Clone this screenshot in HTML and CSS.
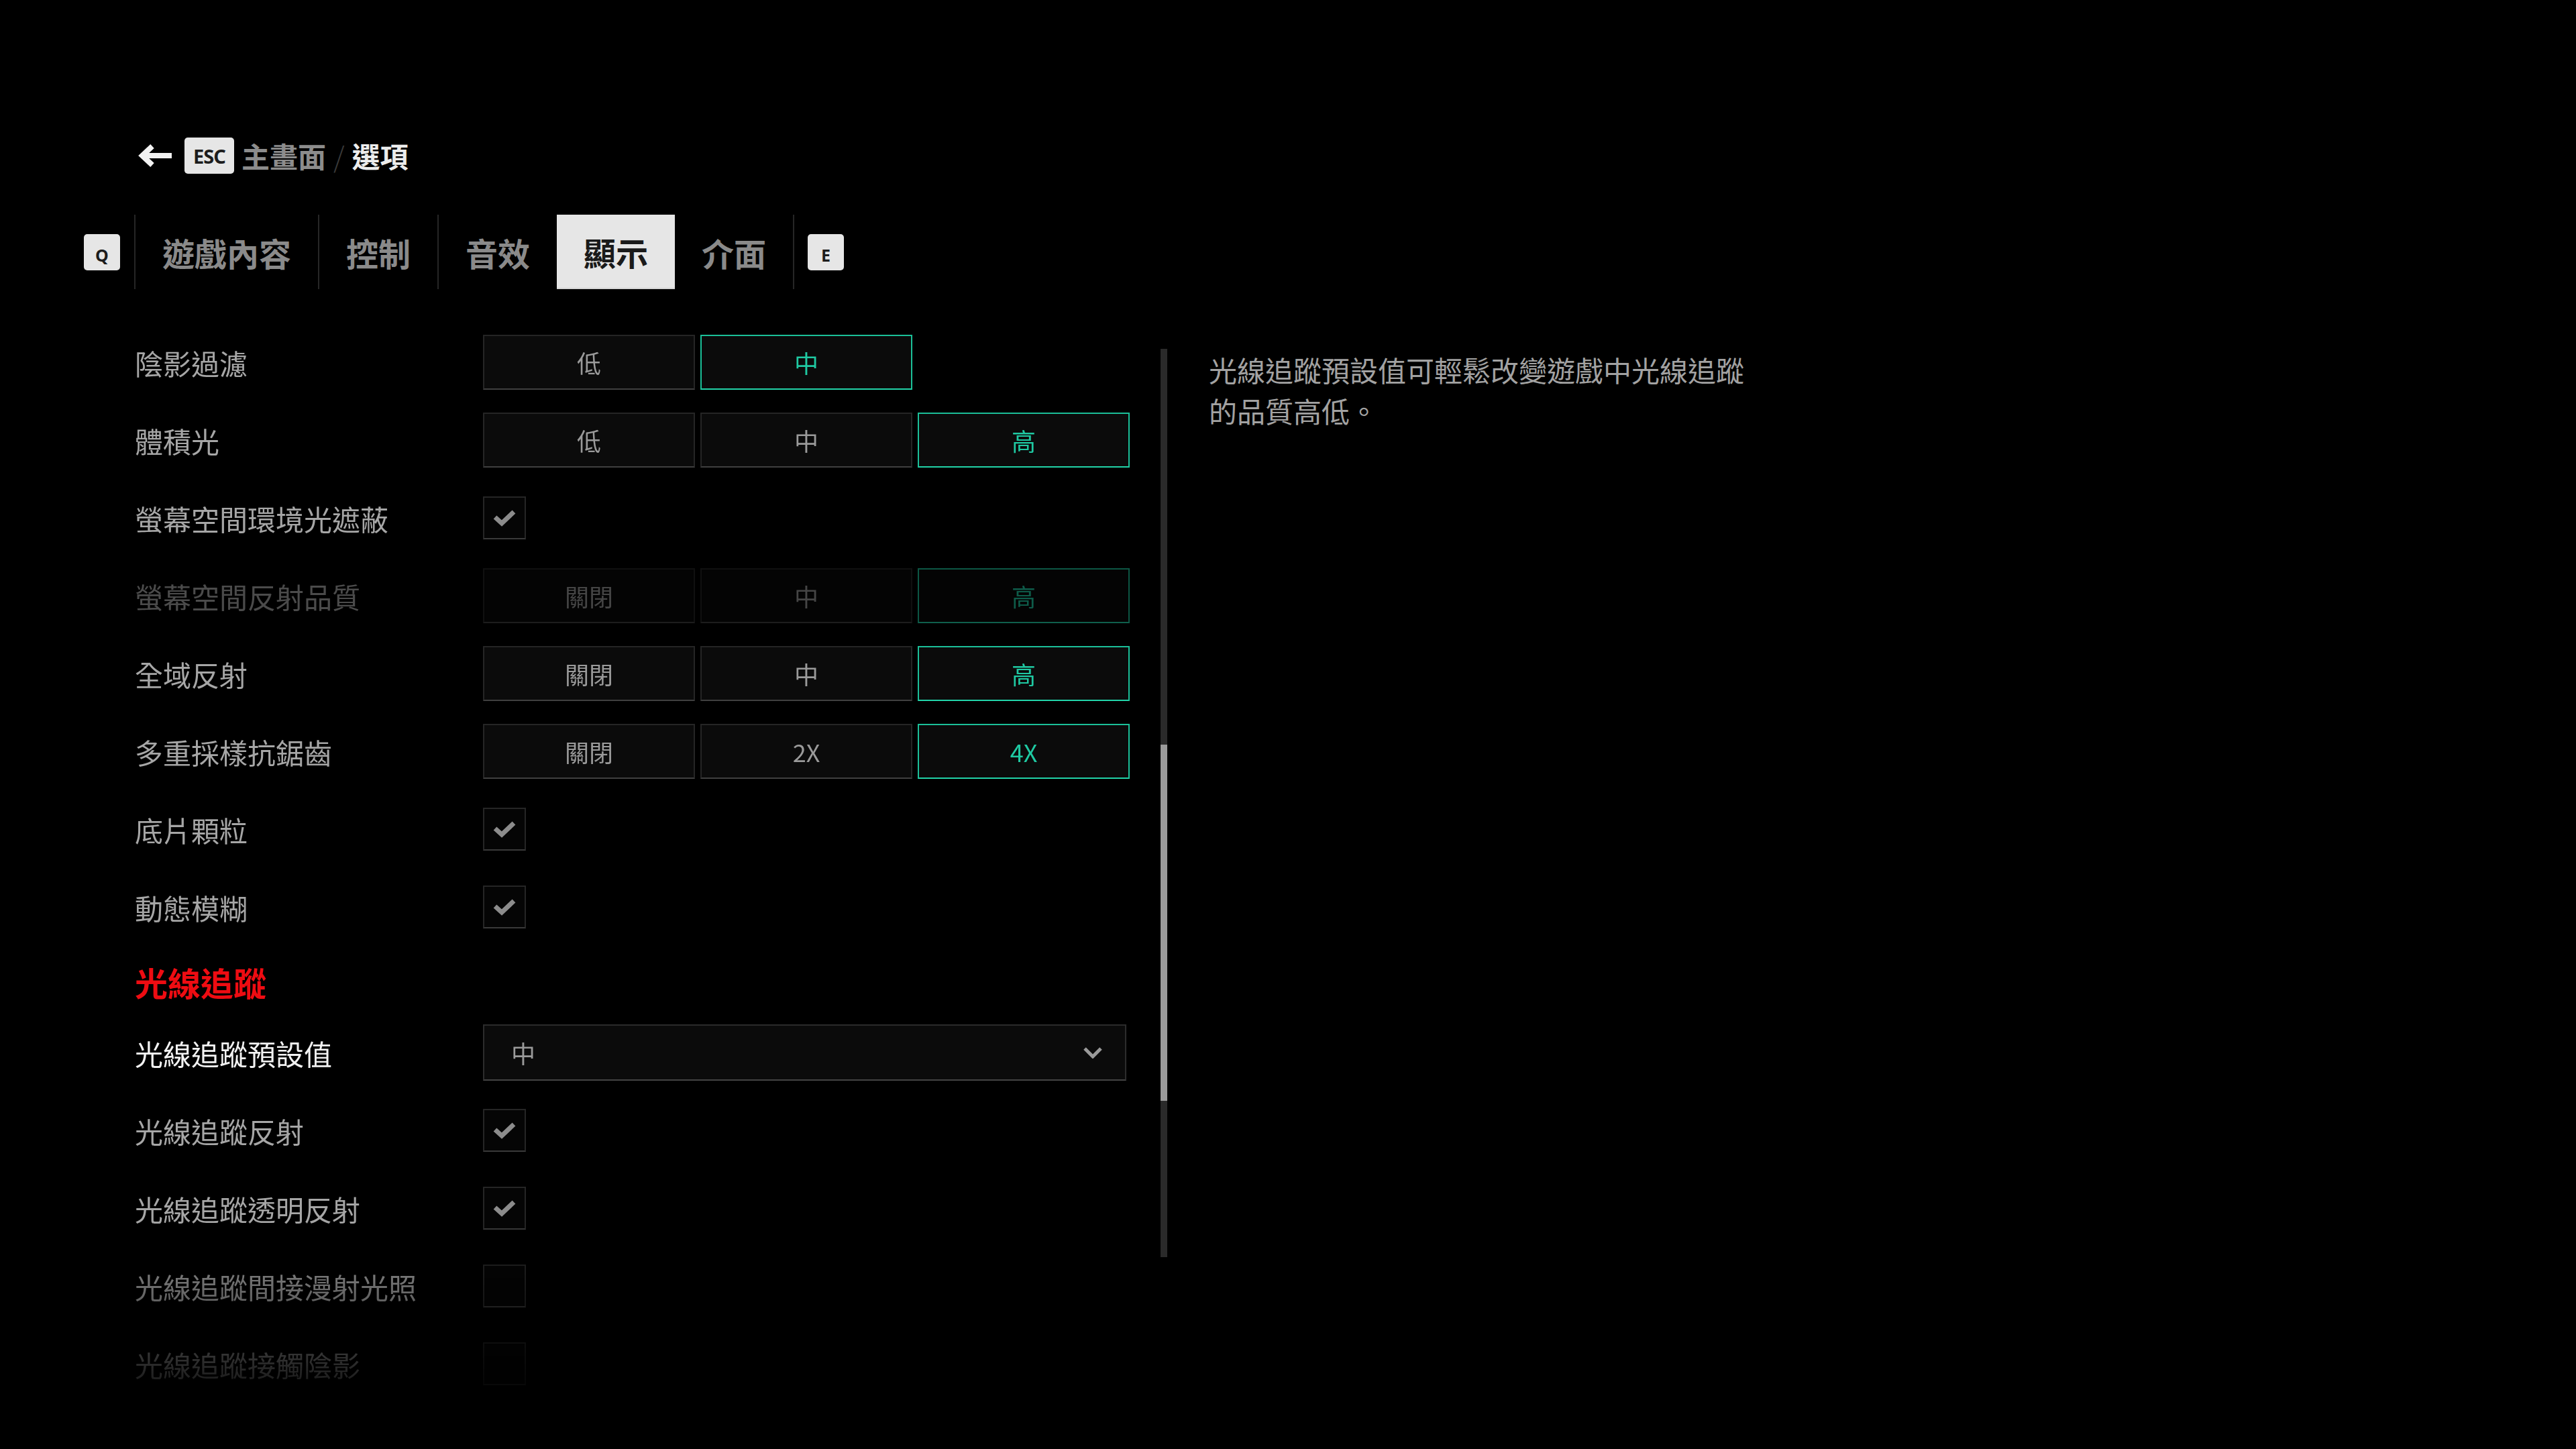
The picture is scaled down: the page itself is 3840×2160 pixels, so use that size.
FILE: index.html
```html
<!DOCTYPE html>
<html lang="zh-Hant">
<head>
  <meta charset="UTF-8">
  <title>選項 - 顯示</title>
  <link rel="stylesheet" href="styles.css">
</head>
<body>
  <div class="page">
    <!-- Breadcrumb -->
    <div class="breadcrumb">
      <svg class="back-arrow" width="50" height="34" viewBox="0 0 50 34">
        <path d="M50 17 H9" stroke="#f2f2f2" stroke-width="8" fill="none"/>
        <path d="M21 3 L6 17 L21 31" stroke="#f2f2f2" stroke-width="8" fill="none" stroke-linejoin="miter"/>
      </svg>
      <span class="key key-esc">ESC</span>
      <span class="crumb">主畫面</span>
      <span class="slash">/</span>
      <span class="crumb current">選項</span>
    </div>

    <!-- Tabs -->
    <div class="tabs">
      <span class="key key-small key-prev">Q</span>
      <span class="tab-sep"></span>
      <span class="tab">遊戲內容</span>
      <span class="tab-sep"></span>
      <span class="tab">控制</span>
      <span class="tab-sep"></span>
      <span class="tab">音效</span>
      <span class="tab active">顯示</span>
      <span class="tab">介面</span>
      <span class="tab-sep"></span>
      <span class="key key-small key-next">E</span>
    </div>

    <!-- Content -->
    <div class="content">
      <div class="settings">
        <div class="row">
          <div class="label">陰影過濾</div>
          <div class="segments">
            <div class="seg">低</div>
            <div class="seg selected">中</div>
          </div>
        </div>
        <div class="row">
          <div class="label">體積光</div>
          <div class="segments">
            <div class="seg">低</div>
            <div class="seg">中</div>
            <div class="seg selected">高</div>
          </div>
        </div>
        <div class="row">
          <div class="label">螢幕空間環境光遮蔽</div>
          <div class="checkbox checked">
            <svg width="34" height="26" viewBox="0 0 34 26"><polyline points="3,12 13,21 31,4" stroke="#8c8c8c" stroke-width="7" fill="none"/></svg>
          </div>
        </div>
        <div class="row disabled">
          <div class="label">螢幕空間反射品質</div>
          <div class="segments">
            <div class="seg">關閉</div>
            <div class="seg">中</div>
            <div class="seg selected">高</div>
          </div>
        </div>
        <div class="row">
          <div class="label">全域反射</div>
          <div class="segments">
            <div class="seg">關閉</div>
            <div class="seg">中</div>
            <div class="seg selected">高</div>
          </div>
        </div>
        <div class="row">
          <div class="label">多重採樣抗鋸齒</div>
          <div class="segments">
            <div class="seg">關閉</div>
            <div class="seg">2X</div>
            <div class="seg selected">4X</div>
          </div>
        </div>
        <div class="row">
          <div class="label">底片顆粒</div>
          <div class="checkbox checked">
            <svg width="34" height="26" viewBox="0 0 34 26"><polyline points="3,12 13,21 31,4" stroke="#8c8c8c" stroke-width="7" fill="none"/></svg>
          </div>
        </div>
        <div class="row">
          <div class="label">動態模糊</div>
          <div class="checkbox checked">
            <svg width="34" height="26" viewBox="0 0 34 26"><polyline points="3,12 13,21 31,4" stroke="#8c8c8c" stroke-width="7" fill="none"/></svg>
          </div>
        </div>

        <div class="section-title">光線追蹤</div>

        <div class="row focused">
          <div class="label">光線追蹤預設值</div>
          <div class="dropdown">
            <span>中</span>
            <svg width="28" height="17" viewBox="0 0 28 17"><polyline points="2,2 14,14 26,2" stroke="#9a9a9a" stroke-width="5" fill="none"/></svg>
          </div>
        </div>
        <div class="row">
          <div class="label">光線追蹤反射</div>
          <div class="checkbox checked">
            <svg width="34" height="26" viewBox="0 0 34 26"><polyline points="3,12 13,21 31,4" stroke="#8c8c8c" stroke-width="7" fill="none"/></svg>
          </div>
        </div>
        <div class="row">
          <div class="label">光線追蹤透明反射</div>
          <div class="checkbox checked">
            <svg width="34" height="26" viewBox="0 0 34 26"><polyline points="3,12 13,21 31,4" stroke="#8c8c8c" stroke-width="7" fill="none"/></svg>
          </div>
        </div>
        <div class="row">
          <div class="label">光線追蹤間接漫射光照</div>
          <div class="checkbox"></div>
        </div>
        <div class="row">
          <div class="label">光線追蹤接觸陰影</div>
          <div class="checkbox"></div>
        </div>
      </div>

      <div class="scrollbar"><div class="thumb"></div></div>

      <p class="description">光線追蹤預設值可輕鬆改變遊戲中光線追蹤的品質高低。</p>
    </div>
  </div>
</body>
</html>
```

FILE: styles.css
```css
* {
  margin: 0;
  padding: 0;
  box-sizing: border-box;
}

body {
  background-color: #000;
  font-family: "Noto Sans CJK TC", "Noto Sans", sans-serif;
  color: #a6a6a6;
  width: 3840px;
  height: 2160px;
  overflow: hidden;
}

.page {
  padding-top: 205px;
}

/* Breadcrumb */
.breadcrumb {
  display: flex;
  align-items: center;
  height: 54px;
  padding-left: 206px;
  gap: 11px;
}

.back-arrow {
  margin-right: 8px;
}

.key {
  display: flex;
  align-items: center;
  justify-content: center;
  background-color: #e6e6e6;
  color: #1c1c1c;
  border-radius: 5px;
  font-family: "Noto Sans", "Open Sans", sans-serif;
  font-weight: 700;
}

.key-esc {
  width: 74px;
  height: 54px;
  font-size: 29px;
  letter-spacing: -1px;
}

.key-small {
  width: 54px;
  height: 54px;
  font-size: 25px;
  padding-top: 9px;
}

.key-prev {
  margin-right: 21px;
}

.key-next {
  margin-left: 20px;
}

.crumb {
  font-size: 42px;
  font-weight: 700;
  color: #8c8c8c;
  line-height: 1;
}

.crumb.current {
  color: #ececec;
}

.slash {
  font-size: 42px;
  font-weight: 300;
  color: #3a3a3a;
  line-height: 1;
}

/* Tabs */
.tabs {
  display: flex;
  align-items: center;
  height: 111px;
  margin-top: 61px;
  padding-left: 125px;
}

.tab-sep {
  width: 2px;
  height: 111px;
  background-color: #262626;
}

.tab {
  height: 111px;
  display: flex;
  align-items: center;
  padding: 0 40px;
  font-size: 48px;
  font-weight: 700;
  color: #8a8a8a;
}

.tab.active {
  background-color: #e6e6e6;
  color: #1a1a1a;
  border-bottom: 2px solid #d4d4d4;
}

/* Content */
.content {
  display: flex;
  align-items: flex-start;
  margin-top: 51px;
  padding-left: 201px;
}

.settings {
  width: 1483px;
  -webkit-mask-image: linear-gradient(to bottom, #000 83%, rgba(0, 0, 0, 0.06) 100%);
  mask-image: linear-gradient(to bottom, #000 83%, rgba(0, 0, 0, 0.06) 100%);
}

.row {
  display: flex;
  align-items: center;
  height: 116px;
}

.label {
  width: 519px;
  font-size: 42px;
  color: #a6a6a6;
}

.row.focused .label {
  color: #f2f2f2;
}

.row.disabled {
  opacity: 0.45;
}

.section-title {
  height: 101px;
  display: flex;
  align-items: center;
  padding-top: 6px;
  font-size: 49px;
  font-weight: 700;
  color: #ee0c12;
}

.segments {
  display: flex;
  gap: 8px;
}

.seg {
  width: 316px;
  height: 82px;
  display: flex;
  align-items: center;
  justify-content: center;
  background-color: #0b0b0b;
  border: 2px solid #252525;
  border-bottom-color: #404040;
  font-size: 36px;
  color: #9a9a9a;
}

.seg.selected {
  border-color: #1bbf98;
  border-bottom-color: #22d3a8;
  color: #1fc9a2;
}

.checkbox {
  width: 64px;
  height: 64px;
  display: flex;
  align-items: center;
  justify-content: center;
  background-color: #050505;
  border: 2px solid #252525;
  border-bottom-color: #3a3a3a;
}

.dropdown {
  width: 959px;
  height: 84px;
  display: flex;
  align-items: center;
  justify-content: space-between;
  padding: 0 34px 0 40px;
  background-color: #0b0b0b;
  border: 2px solid #2c2c2c;
  border-bottom-color: #444;
  font-size: 36px;
  color: #9a9a9a;
}

/* Scrollbar */
.scrollbar {
  width: 10px;
  height: 1354px;
  margin: 38px 0 0 46px;
  padding-top: 590px;
  background-color: #2a2a2a;
}

.thumb {
  height: 531px;
  background-color: #9a9a9a;
}

/* Description */
.description {
  width: 820px;
  margin: 38px 0 0 62px;
  font-size: 42px;
  line-height: 61px;
  color: #a2a2a2;
}
```
